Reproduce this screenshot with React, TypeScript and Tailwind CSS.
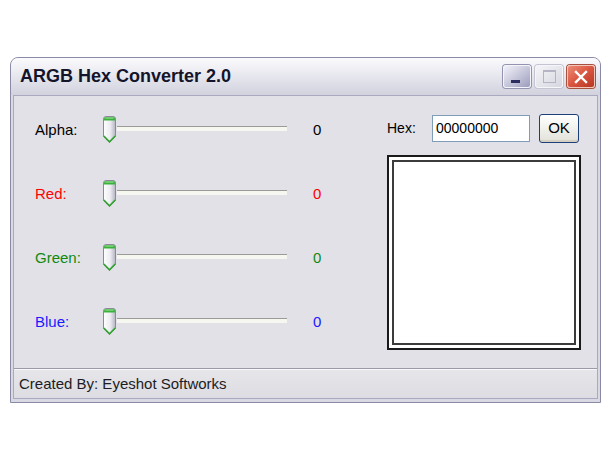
import React from 'react';

function Thumb() {
  return (
    <svg width="15" height="28" viewBox="0 0 15 28">
      <defs>
        <linearGradient id="tb" x1="0" x2="1" y1="0" y2="0">
          <stop offset="0" stopColor="#ffffff" />
          <stop offset="0.55" stopColor="#ededf2" />
          <stop offset="1" stopColor="#b4b4c2" />
        </linearGradient>
      </defs>
      <path d="M1.5 3 Q1.5 0.5 4 0.5 H11 Q13.5 0.5 13.5 3 V20.5 L7.5 26.5 L1.5 20.5 Z" fill="url(#tb)" stroke="#8a8a9a" />
      <path d="M2 3 Q2 1 4 1 H11 Q13 1 13 3 V4.5 H2 Z" fill="#3db13d" />
      <path d="M3.5 2 H11.5" stroke="#a2e8a2" strokeWidth="1" />
      <path d="M1.8 20 L7.5 25.8 L13.2 20" fill="none" stroke="#34a434" strokeWidth="1.7" />
    </svg>
  );
}

function SliderRow({ label, color }: { label: string; color: string }) {
  return (
    <div className="flex h-[28px] items-center">
      <span className={`w-[67px] text-[15px] ${color}`}>{label}</span>
      <Thumb />
      <div className="mt-[-3px] h-[5px] w-[170px] border-t border-[#9c9c96] bg-[#f7f7f1]" />
      <span className={`ml-[26px] text-[15px] ${color}`}>0</span>
    </div>
  );
}

export default function App() {
  return (
    <div className="h-[459px] w-[612px] overflow-hidden bg-white pl-[10px] pt-[57px] font-['Liberation_Sans',Arial,sans-serif]">
      <div className="flex h-[346px] w-[591px] flex-col rounded-t-[8px] border border-[#8a8aa6] bg-[#d9d9e3]">
        {/* title bar */}
        <div className="flex h-[37px] items-center rounded-t-[7px] bg-linear-to-b from-[#fbfbfd] via-[#e6e6ee] to-[#d2d2de] pl-[9px] pr-[5px]">
          <span className="text-[18px] font-bold text-[#14142a]">ARGB Hex Converter 2.0</span>
          <div className="ml-auto flex gap-[4px]">
            <div className="relative h-[23px] w-[28px] rounded-[3px] border border-[#f4f4fa] bg-linear-to-br from-[#f2f2fa] via-[#c8c8dc] to-[#9d9dbc] shadow-[0_0_0_1px_#9494b0]">
              <div className="absolute left-[7px] top-[14px] h-[3px] w-[9px] bg-[#2c2c5e]" />
            </div>
            <div className="relative h-[23px] w-[28px] rounded-[3px] border border-[#f6f6fa] bg-linear-to-br from-[#f4f4f8] to-[#d6d6e0] shadow-[0_0_0_1px_#c4c4d2]">
              <div className="absolute left-[7px] top-[4px] h-[13px] w-[13px] border border-[#b4b4c4] border-t-2" />
            </div>
            <div className="flex h-[23px] w-[28px] items-center justify-center rounded-[3px] border border-[#f2c6bc] bg-linear-to-br from-[#ec8a76] via-[#d9553f] to-[#b63624] shadow-[0_0_0_1px_#a8503e]">
              <svg width="14" height="14" viewBox="0 0 14 14">
                <path d="M2 2 L12 12 M12 2 L2 12" stroke="#ffffff" strokeWidth="2.4" strokeLinecap="square" />
              </svg>
            </div>
          </div>
        </div>

        {/* client */}
        <div className="mx-[2px] mb-[3px] flex flex-1 flex-col border border-[#a9a9bf] bg-[#e2e1e7]">
          <div className="flex h-[272px]">
            <div className="flex flex-col gap-[36px] pl-[21px] pt-[20px]">
              <SliderRow label="Alpha:" color="text-black" />
              <SliderRow label="Red:" color="text-[#ff0000]" />
              <SliderRow label="Green:" color="text-[#108a10]" />
              <SliderRow label="Blue:" color="text-[#1a1aff]" />
            </div>
            <div className="ml-auto mr-[16px] flex w-[194px] flex-col pt-[18px]">
              <div className="flex h-[29px] items-center">
                <span className="w-[45px] text-[14px] text-black">Hex:</span>
                <div className="flex h-[27px] w-[98px] items-center border border-[#7f9db9] bg-white pl-[3px] text-[14px] text-black">
                  00000000
                </div>
                <div className="ml-[9px] flex h-[29px] w-[40px] items-center justify-center rounded-[3px] border border-[#1c3f7a] bg-linear-to-b from-[#ffffff] to-[#e2e2da] text-[15px] text-black shadow-[inset_0_-2px_0_#d6d0c4]">
                  OK
                </div>
              </div>
              <div className="mt-[12px] flex h-[195px] w-[194px] border-2 border-[#1a1a1a] bg-white p-[3px]">
                <div className="flex-1 border-2 border-[#3c3c3c] bg-white" />
              </div>
            </div>
          </div>
          <div className="border-t border-[#9b9ba8] border-b border-b-[#f8f8fa]" />
          <div className="flex h-[28px] items-center bg-linear-to-b from-[#e6e6ea] to-[#dcdce2] pl-[5px] text-[15px] text-[#1c1c24]">
            Created By: Eyeshot Softworks
          </div>
        </div>
      </div>
    </div>
  );
}
